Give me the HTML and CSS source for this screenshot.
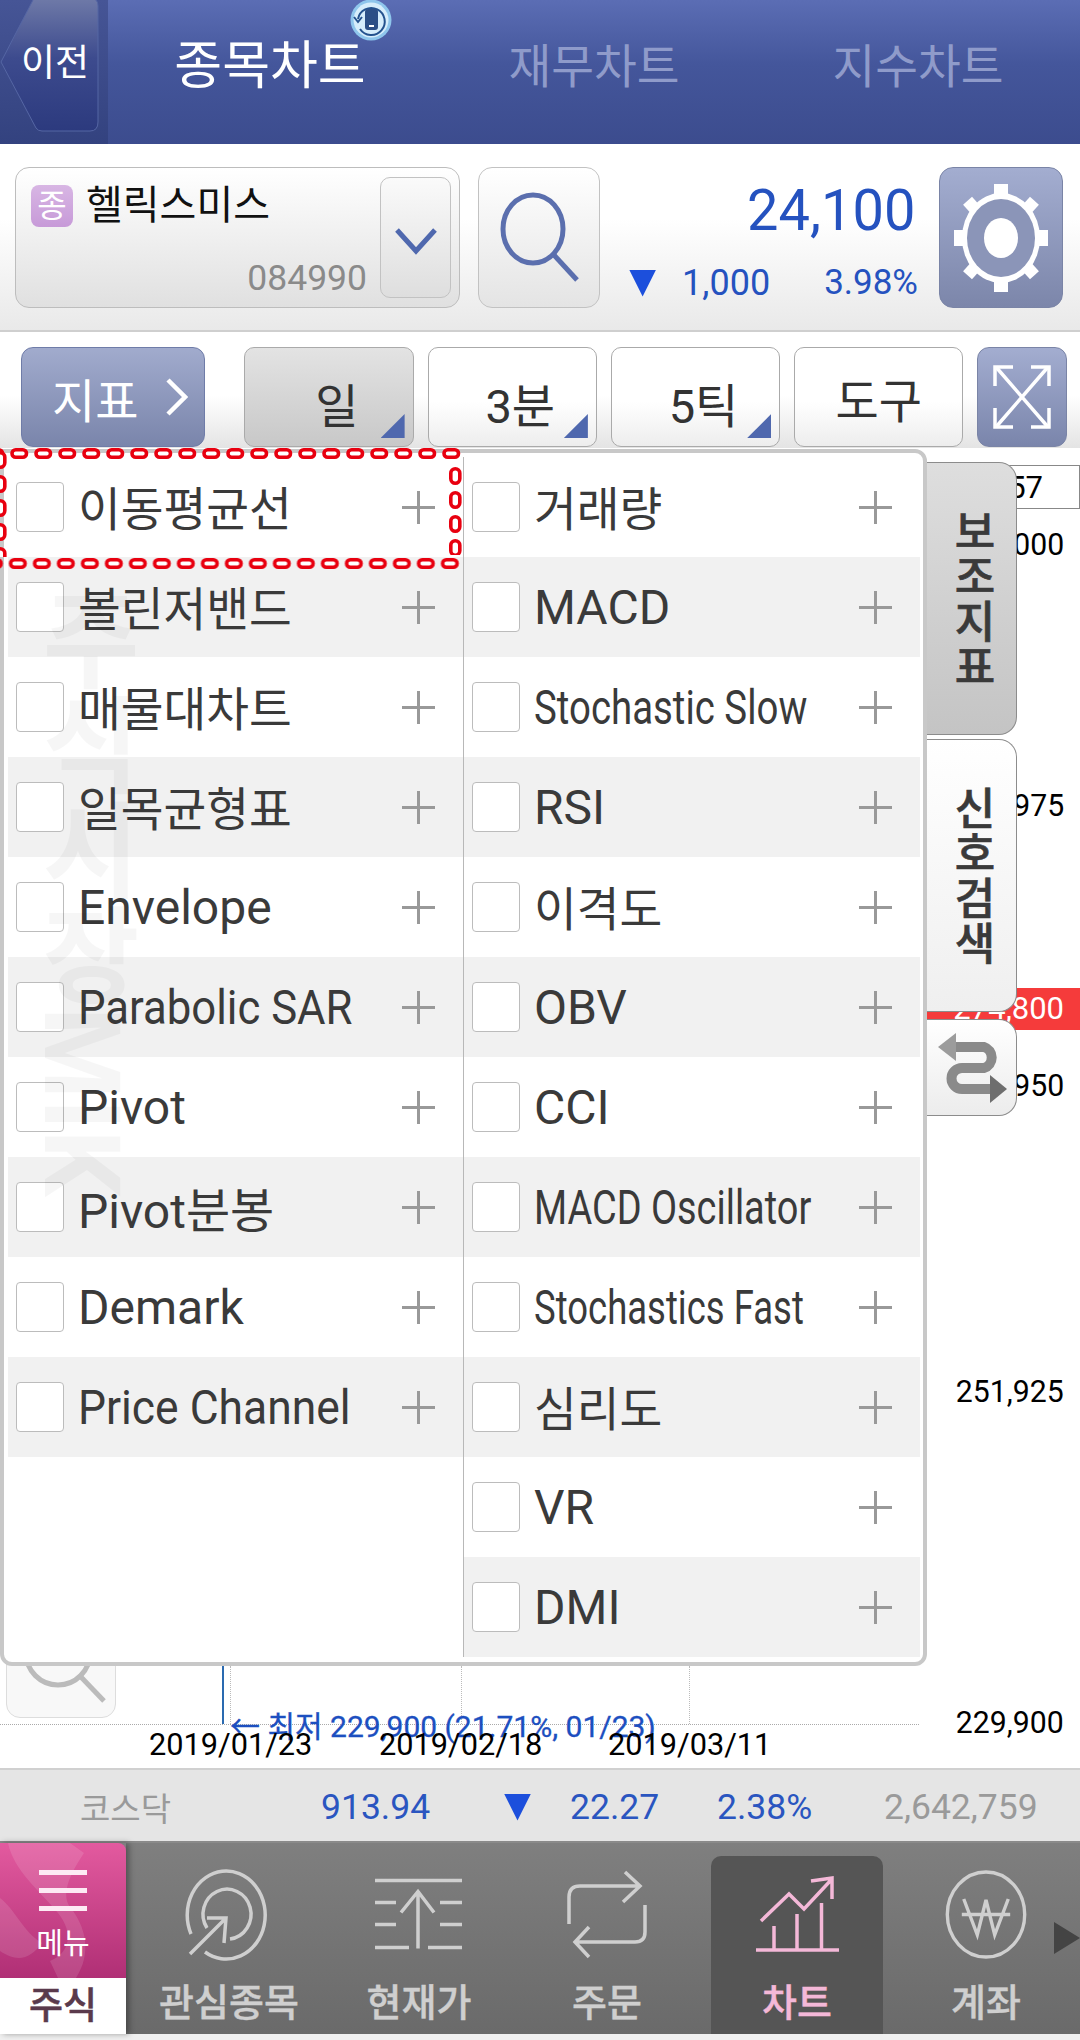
FILE: index.html
```html
<!DOCTYPE html>
<html lang="ko">
<head>
  <meta charset="UTF-8">
  <title>종목차트</title>
  <link rel="stylesheet" href="styles.css">
</head>
<body>
  <div class="page">
    <header class="topbar">
      <div class="back">
        <svg class="back-shape" width="104" height="134" viewBox="0 0 104 134">
          <defs>
            <linearGradient id="backFill" x1="0" y1="0" x2="0" y2="1">
              <stop offset="0" stop-color="#6f7aa8"/>
              <stop offset="0.45" stop-color="#3d4b8e"/>
              <stop offset="1" stop-color="#2c3a7e"/>
            </linearGradient>
          </defs>
          <path d="M1 62 L34 -2 H90 Q98 -2 98 6 V122 Q98 131 90 131 H42 Q38 131 36 128 Z" fill="url(#backFill)" stroke="#5566a4" stroke-width="1"/>
        </svg>
        <span class="back-text">이전</span>
      </div>
      <div class="tab tab-on">종목차트
        <svg class="sync" width="42" height="42" viewBox="0 0 42 42">
          <circle cx="21" cy="21" r="20.500" fill="#8fc6ec"/>
          <circle cx="21" cy="21" r="17.500" fill="#d6edfb"/>
          <path d="M8 20 A13.500 13.500 0 1 1 10 30" fill="none" stroke="#24528e" stroke-width="2"/>
          <path d="M4 18 L8 23 L12 18" fill="none" stroke="#24528e" stroke-width="2"/>
          <rect x="15" y="10" width="13" height="21" rx="3" fill="#2c4f86"/>
          <rect x="19" y="26" width="5" height="2" fill="#fff"/>
        </svg>
      </div>
      <div class="tab">재무차트</div>
      <div class="tab">지수차트</div>
    </header>

    <section class="stockbar">
      <div class="stock-box">
        <div class="stock-info">
          <div class="stock-name"><span class="badge">종</span>헬릭스미스</div>
          <div class="stock-code">084990</div>
        </div>
        <div class="stock-drop">
          <svg width="42" height="28" viewBox="0 0 42 28"><path d="M2 3 L21 24 L40 3" fill="none" stroke="#4f68ae" stroke-width="5"/></svg>
        </div>
      </div>
      <div class="search-btn">
        <svg width="90" height="100" viewBox="0 0 90 100">
          <ellipse cx="39" cy="41" rx="30" ry="34" fill="none" stroke="#5b6fae" stroke-width="5"/>
          <path d="M60 67 L83 92" fill="none" stroke="#5b6fae" stroke-width="5"/>
        </svg>
      </div>
      <div class="quote">
        <div class="quote-price">24,100</div>
        <div class="quote-sub">
          <span class="down-mark"></span>
          <span class="quote-change">1,000</span>
          <span class="quote-rate">3.98%</span>
        </div>
      </div>
      <div class="gear-btn">
        <svg width="94" height="108" viewBox="-47 -54 94 108">
          <g fill="#fff">
            <rect x="-7" y="-54" width="14" height="108"/>
            <rect x="-47" y="-8" width="94" height="16"/>
            <rect x="-6" y="-50" width="12" height="100" transform="rotate(42)"/>
            <rect x="-6" y="-50" width="12" height="100" transform="rotate(-42)"/>
            <ellipse rx="39" ry="45"/>
          </g>
          <ellipse rx="34" ry="39" fill="#8b95b8"/>
          <ellipse rx="17" ry="20" fill="#fff"/>
        </svg>
      </div>
    </section>

    <section class="toolbar">
      <div class="ind-btn">지표
        <svg width="22" height="38" viewBox="0 0 22 38"><path d="M2 2 L19 19 L2 36" fill="none" stroke="#fff" stroke-width="4.5"/></svg>
      </div>
      <div class="tool tool-on tool-low">일<i class="corner"></i></div>
      <div class="tool tool-low">3분<i class="corner"></i></div>
      <div class="tool tool-low">5틱<i class="corner"></i></div>
      <div class="tool">도구</div>
      <div class="expand-btn">
        <svg width="58" height="66" viewBox="0 0 58 66" fill="none" stroke="#fff" stroke-width="3.5">
          <path d="M3 3 L55 63 M55 3 L3 63"/>
          <path d="M20 3 H2 V22 M38 3 H56 V22 M2 44 V63 H20 M56 44 V63 H38"/>
        </svg>
      </div>
    </section>

    <section class="chart">
      <div class="dot-h"></div>
      <div class="dot-v dot-v1"></div>
      <div class="dot-v dot-v2"></div>
      <div class="dot-v dot-v3"></div>
      <div class="low-line"></div>
      <div class="zoom-btn">
        <svg width="100" height="70" viewBox="0 0 100 70">
          <circle cx="51" cy="6" r="32" fill="none" stroke="#bbb" stroke-width="5"/>
          <path d="M74 30 L97 54" fill="none" stroke="#bbb" stroke-width="5"/>
        </svg>
      </div>

      <div class="axis-box">57</div>
      <div class="axis axis-1">000</div>
      <div class="axis axis-2">975</div>
      <div class="axis-now">274,800</div>
      <div class="axis axis-3">950</div>
      <div class="axis axis-4">251,925</div>
      <div class="axis axis-5">229,900</div>

      <div class="low-text">← 최저 229,900 (21.71%, 01/23)</div>
      <div class="date date-1">2019/01/23</div>
      <div class="date date-2">2019/02/18</div>
      <div class="date date-3">2019/03/11</div>

      <div class="side-tabs">
        <div class="side-tab side-tab-on"><span>보조지표</span></div>
        <div class="side-tab"><span>신호검색</span></div>
        <div class="side-swap">
          <svg width="70" height="70" viewBox="0 0 70 70">
            <path d="M16 14 H46 A11 11 0 0 1 46 35 H24 A10.500 10.500 0 0 0 24 56 H54" fill="none" stroke="#8a8a8a" stroke-width="10"/>
            <path d="M0 14 L18 0 V28 Z" fill="#9c9c9c"/>
            <path d="M69 56 L52 42 V70 Z" fill="#6e6e6e"/>
          </svg>
        </div>
      </div>

      <div class="panel">
        <div class="col">
          <div class="row"><i class="check"></i><span class="label ko">이동평균선</span><i class="plus"></i></div>
          <div class="row"><i class="check"></i><span class="label ko">볼린저밴드</span><i class="plus"></i></div>
          <div class="row"><i class="check"></i><span class="label ko">매물대차트</span><i class="plus"></i></div>
          <div class="row"><i class="check"></i><span class="label ko">일목균형표</span><i class="plus"></i></div>
          <div class="row"><i class="check"></i><span class="label">Envelope</span><i class="plus"></i></div>
          <div class="row"><i class="check"></i><span class="label fit-91">Parabolic SAR</span><i class="plus"></i></div>
          <div class="row"><i class="check"></i><span class="label">Pivot</span><i class="plus"></i></div>
          <div class="row"><i class="check"></i><span class="label">Pivot분봉</span><i class="plus"></i></div>
          <div class="row"><i class="check"></i><span class="label">Demark</span><i class="plus"></i></div>
          <div class="row"><i class="check"></i><span class="label fit-92">Price Channel</span><i class="plus"></i></div>
        </div>
        <div class="col col-right">
          <div class="row"><i class="check"></i><span class="label ko">거래량</span><i class="plus"></i></div>
          <div class="row"><i class="check"></i><span class="label">MACD</span><i class="plus"></i></div>
          <div class="row"><i class="check"></i><span class="label fit-80">Stochastic Slow</span><i class="plus"></i></div>
          <div class="row"><i class="check"></i><span class="label">RSI</span><i class="plus"></i></div>
          <div class="row"><i class="check"></i><span class="label ko">이격도</span><i class="plus"></i></div>
          <div class="row"><i class="check"></i><span class="label">OBV</span><i class="plus"></i></div>
          <div class="row"><i class="check"></i><span class="label">CCI</span><i class="plus"></i></div>
          <div class="row"><i class="check"></i><span class="label fit-79">MACD Oscillator</span><i class="plus"></i></div>
          <div class="row"><i class="check"></i><span class="label fit-76">Stochastics Fast</span><i class="plus"></i></div>
          <div class="row"><i class="check"></i><span class="label ko">심리도</span><i class="plus"></i></div>
          <div class="row"><i class="check"></i><span class="label">VR</span><i class="plus"></i></div>
          <div class="row"><i class="check"></i><span class="label">DMI</span><i class="plus"></i></div>
        </div>
        <div class="watermark">주식시장MIK</div>
      </div>

      <!-- red chain around the first row -->
      <svg class="chain" width="470" height="130" viewBox="0 0 470 130">
        <defs>
          <pattern id="pillTop" x="-14" y="0" width="24" height="11" patternUnits="userSpaceOnUse">
            <rect x="2" y="1.800" width="14.500" height="7.400" rx="3.700" fill="#fff" stroke="#e8000f" stroke-width="3.600"/>
          </pattern>
          <pattern id="pillBottom" x="-15.400" y="110" width="24" height="11" patternUnits="userSpaceOnUse">
            <rect x="2" y="1.800" width="14.500" height="7.400" rx="3.700" fill="#fff" stroke="#e8000f" stroke-width="3.600"/>
          </pattern>
          <pattern id="pillRight" x="449" y="19" width="13" height="24" patternUnits="userSpaceOnUse">
            <rect x="1.800" y="1.800" width="9" height="14.500" rx="4.500" fill="#fff" stroke="#e8000f" stroke-width="3.600"/>
          </pattern>
          <pattern id="pillLeft" x="-6" y="3" width="13" height="24" patternUnits="userSpaceOnUse">
            <rect x="1.800" y="1.800" width="9" height="14.500" rx="4.500" fill="#fff" stroke="#e8000f" stroke-width="3.600"/>
          </pattern>
        </defs>
        <rect x="0" y="0" width="462" height="11" fill="url(#pillTop)"/>
        <rect x="0" y="110" width="460" height="11" fill="url(#pillBottom)"/>
        <rect x="449" y="19" width="13" height="88" fill="url(#pillRight)"/>
        <rect x="0" y="3" width="7" height="106" fill="url(#pillLeft)"/>
      </svg>
    </section>

    <section class="indexbar">
      <span class="idx-name">코스닥</span>
      <span class="idx-value">913.94</span>
      <span class="down-mark"></span>
      <span class="idx-change">22.27</span>
      <span class="idx-rate">2.38%</span>
      <span class="idx-volume">2,642,759</span>
    </section>

    <nav class="tabbar">
      <div class="menu">
        <div class="menu-top">
          <svg class="swirl" width="126" height="135" viewBox="0 0 126 135">
            <path d="M8 0 C14 28 40 48 58 70 C74 90 70 110 50 118 L58 135 H76 C92 110 86 84 70 64 C60 50 72 28 84 10 L70 0 Z" fill="#fff" opacity="0.12"/>
            <path d="M0 55 C14 65 24 90 42 100 C30 116 18 120 0 108 Z" fill="#fff" opacity="0.12"/>
          </svg>
          <div class="burger"><i></i><i></i><i></i></div>
          <div class="menu-label">메뉴</div>
        </div>
        <div class="menu-bottom">주식</div>
      </div>

      <div class="nav-item nav-a">
        <svg class="nav-icon" width="84" height="89" viewBox="0 0 84 89">
          <path d="M4 64 A39 44 0 1 1 18 82"/>
          <path d="M20 58 A24 25 0 1 1 43 69"/>
          <path d="M3 84 L39 48 M20 48 H39 L37 73"/>
        </svg>
        <span>관심종목</span>
      </div>
      <div class="nav-item nav-a">
        <svg class="nav-icon" width="88" height="72" viewBox="0 0 88 72">
          <path d="M0 2 H87 M0 24 H21 M0 46 H21 M0 69 H34 M65 24 H87 M65 46 H87 M53 69 H87"/>
          <path d="M43 70 V13 M26 34 L43 13 L59 34"/>
        </svg>
        <span>현재가</span>
      </div>
      <div class="nav-item nav-b">
        <svg class="nav-icon" width="78" height="85" viewBox="0 0 78 85">
          <path d="M1 52 V25 Q1 14 12 14 H72 M57 0 L72 14 L55 30"/>
          <path d="M77 33 V60 Q77 70 67 70 H7 M21 55 L7 70 L21 85"/>
        </svg>
        <span>주문</span>
      </div>
      <div class="nav-item nav-on">
        <svg class="nav-icon" width="83" height="77" viewBox="0 0 83 77">
          <path d="M0 74 H83 M18 50 V74 M41 38 V74 M65.500 27 V74"/>
          <path d="M5 45 L33 18 L48 33 L76 3 M55 5 L76 2 V23"/>
        </svg>
        <span>차트</span>
      </div>
      <div class="nav-item nav-c">
        <svg class="nav-icon" width="84" height="92" viewBox="0 0 84 92">
          <ellipse cx="42" cy="46" rx="40" ry="44"/>
          <path d="M19 30 L33 67 L42 31 L51 67 L65 30 M17 46 H67"/>
        </svg>
        <span>계좌</span>
      </div>
      <i class="nav-more"></i>
    </nav>
    <div class="bottom-strip"></div>
  </div>
</body>
</html>
```

FILE: styles.css
```css
* {
  box-sizing: border-box;
}
body {
  margin: 0;
  font-family: Roboto, "Noto Sans CJK KR", sans-serif;
  color: #333;
  background: #fff;
}
.page {
  width: 1080px;
  height: 2040px;
  display: flex;
  flex-direction: column;
  overflow: hidden;
}

/* top title bar */
.topbar {
  height: 144px;
  display: flex;
  background: linear-gradient(#5b6db4, #44569b 45%, #3c4c8e);
}
.back {
  position: relative;
  width: 108px;
  height: 144px;
  overflow: hidden;
  display: flex;
  align-items: center;
  padding: 0 0 24px 21px;
  background: linear-gradient(#465596, #33427f);
}
.back-shape {
  position: absolute;
  left: 0;
  top: 0;
}
.back-text {
  position: relative;
  font-size: 37px;
  color: #fff;
}
.tab {
  position: relative;
  width: 324px;
  height: 126px;
  display: flex;
  align-items: center;
  justify-content: center;
  padding-bottom: 2px;
  font-size: 46.5px;
  color: #8f9bca;
}
.tab-on {
  font-size: 52px;
  color: #fff;
  padding-bottom: 4px;
}
.sync {
  position: absolute;
  left: 242px;
  top: -1px;
}

/* stock row */
.stockbar {
  height: 188px;
  display: flex;
  padding: 23px 17px 0 15px;
  border-bottom: 2px solid #cfcfcf;
  background: linear-gradient(#fff 40%, #e9e9e9);
}
.stock-box {
  width: 445px;
  height: 141px;
  display: flex;
  padding: 9px 8px 9px 15px;
  border: 1px solid #bdbdbd;
  border-radius: 14px;
  background: linear-gradient(#fff, #e0e0e0);
}
.stock-info {
  width: 336px;
  display: flex;
  flex-direction: column;
  justify-content: space-between;
}
.stock-name {
  display: flex;
  align-items: center;
  margin-top: 8px;
  font-size: 40px;
  line-height: 42px;
  color: #111;
}
.badge {
  width: 42px;
  height: 42px;
  margin-right: 13px;
  border-radius: 8px;
  background: linear-gradient(#d8b6e4, #c79ad8);
  color: #fff;
  font-size: 32px;
  text-align: center;
}
.stock-code {
  margin-bottom: -2px;
  text-align: right;
  font-size: 35.500px;
  line-height: 44px;
  color: #8a8a8a;
}
.stock-drop {
  width: 71px;
  margin-left: 13px;
  display: flex;
  align-items: center;
  justify-content: center;
  padding-top: 6px;
  border: 1px solid #c2c2c2;
  border-radius: 10px;
  background: linear-gradient(#fafafa, #dedede);
}
.search-btn {
  width: 122px;
  height: 141px;
  margin-left: 18px;
  display: flex;
  align-items: center;
  justify-content: center;
  border: 1px solid #c2c2c2;
  border-radius: 14px;
  background: linear-gradient(#fff, #e4e4e4);
}
.quote {
  width: 315px;
  height: 141px;
  display: flex;
  flex-direction: column;
  align-items: flex-end;
  color: #2552bf;
}
.quote-price {
  margin-top: 10px;
  font-size: 58px;
  line-height: 66px;
  transform: scaleX(0.965);
  transform-origin: right center;
}
.quote-sub {
  display: flex;
  align-items: center;
  margin: 18px -3px 0 0;
  font-size: 36px;
  line-height: 44px;
}
.quote-change {
  margin-right: 54px;
}
.quote-rate {
  font-size: 35px;
}
.down-mark {
  width: 27px;
  height: 27px;
  margin-right: 26px;
  background: #1c4fdc;
  clip-path: polygon(0 0, 100% 0, 50% 100%);
}
.gear-btn {
  width: 124px;
  height: 141px;
  margin-left: 24px;
  display: flex;
  align-items: center;
  justify-content: center;
  border: 1px solid #7a84a6;
  border-radius: 14px;
  background: linear-gradient(#a3add0, #7c86aa);
}

/* indicator and period buttons */
.toolbar {
  height: 116px;
  display: flex;
  padding: 15px 13px 0 21px;
  background: linear-gradient(#fff 55%, #e4e4e4);
}
.ind-btn {
  width: 185px;
  height: 100px;
  margin-right: 39px;
  display: flex;
  align-items: center;
  gap: 28px;
  padding-left: 30px;
  border: 1px solid #6f7ca8;
  border-radius: 12px;
  background: linear-gradient(#a1abcd, #7a85ab);
  font-size: 47px;
  color: #fff;
}
.tool {
  position: relative;
  width: 170px;
  height: 100px;
  margin-right: 14px;
  display: flex;
  align-items: center;
  justify-content: center;
  border: 1px solid #aaa;
  border-radius: 10px;
  background: linear-gradient(#fff 55%, #ededed);
  font-size: 47px;
}
.tool-low {
  padding: 10px 0 0 16px;
}
.tool-on {
  background: linear-gradient(#e3e3e3, #c8c8c8);
}
.corner {
  position: absolute;
  right: 8px;
  bottom: 8px;
  width: 24px;
  height: 24px;
  background: #4f68ae;
  clip-path: polygon(100% 0, 100% 100%, 0 100%);
}
.expand-btn {
  width: 90px;
  height: 100px;
  display: flex;
  align-items: center;
  justify-content: center;
  border: 1px solid #7a84a6;
  border-radius: 12px;
  background: linear-gradient(#a3add0, #7a85ab);
}

/* chart canvas */
.chart {
  position: relative;
  height: 1322px;
  border-bottom: 2px solid #d0d0d0;
  background: #fff;
  font-size: 30px;
  color: #000;
}
.dot-h {
  position: absolute;
  left: 0;
  top: 1276px;
  width: 919px;
  border-top: 1px dotted #aaa;
}
.dot-v {
  position: absolute;
  top: 1218px;
  height: 58px;
  border-left: 1px dotted #bbb;
}
.dot-v1 { left: 230px; }
.dot-v2 { left: 461px; }
.dot-v3 { left: 689px; }
.low-line {
  position: absolute;
  left: 222px;
  top: 1218px;
  width: 2px;
  height: 58px;
  background: #2a6ab0;
}
.zoom-btn {
  position: absolute;
  left: 6px;
  top: 1150px;
  width: 110px;
  height: 120px;
  padding-top: 48px;
  border: 1px solid #ddd;
  border-radius: 14px;
  background: #f8f8f8;
}
.axis-box {
  position: absolute;
  left: 1000px;
  top: 17px;
  width: 80px;
  height: 44px;
  padding-right: 36px;
  border: 1px solid #888;
  text-align: right;
  font-size: 31px;
  line-height: 44px;
}
.axis {
  position: absolute;
  right: 16px;
  font-size: 31px;
  line-height: 40px;
  transform: scaleX(0.975);
  transform-origin: right center;
}
.axis-1 { top: 77px; }
.axis-2 { top: 338px; }
.axis-3 { top: 618px; }
.axis-4 { top: 924px; }
.axis-5 { top: 1255px; }
.axis-now {
  position: absolute;
  left: 927px;
  top: 540px;
  width: 153px;
  height: 42px;
  padding-right: 16px;
  background: #f53b3b;
  color: #fff;
  text-align: right;
  font-size: 31px;
  line-height: 42px;
}
.low-text {
  position: absolute;
  left: 230px;
  top: 1259px;
  font-size: 30px;
  line-height: 40px;
  color: #1c4fc0;
  white-space: nowrap;
  -webkit-text-stroke: 0.3px #1c4fc0;
}
.date {
  position: absolute;
  top: 1277px;
  font-size: 30.700px;
  line-height: 40px;
}
.date-1 { left: 149px; }
.date-2 { left: 379px; }
.date-3 { left: 608px; }

/* tabs to the right of the panel */
.side-tabs {
  position: absolute;
  left: 926px;
  top: 14px;
  display: flex;
  flex-direction: column;
}
.side-tab {
  width: 91px;
  height: 273px;
  margin-bottom: 4px;
  display: flex;
  align-items: center;
  justify-content: center;
  border: 1px solid #8c8c8c;
  border-left: 0;
  border-radius: 0 18px 18px 0;
  background: linear-gradient(#fff, #efefef);
  color: #3a3a3a;
  font-size: 44px;
  font-weight: 500;
  -webkit-text-stroke: 0.6px #3a3a3a;
}
.side-tab span {
  writing-mode: vertical-rl;
  text-orientation: upright;
  letter-spacing: 1px;
}
.side-tab-on {
  background: linear-gradient(#dedede, #c4c4c4);
}
.side-swap {
  width: 91px;
  height: 97px;
  margin-top: 3px;
  display: flex;
  align-items: center;
  justify-content: center;
  padding-left: 3px;
  border: 1px solid #8c8c8c;
  border-left: 0;
  border-radius: 0 18px 18px 0;
  background: linear-gradient(#fff, #ececec);
}

/* indicator list popup */
.panel {
  position: absolute;
  left: 0;
  top: 1px;
  width: 927px;
  height: 1217px;
  display: flex;
  align-items: flex-start;
  padding: 4px 3px 0 4px;
  border: 4px solid #c8c8c8;
  border-radius: 0 12px 12px 12px;
  background: #fff;
}
.col {
  width: 456px;
  height: 1200px;
  border-right: 1px solid #b8b8b8;
}
.col-right {
  border-right: 0;
}
.row {
  height: 100px;
  display: flex;
  align-items: center;
  padding-left: 8px;
  padding-right: 28px;
}
.row:nth-child(even) {
  background: #f1f1f1;
}
.check {
  flex: none;
  width: 48px;
  height: 50px;
  margin-right: 14px;
  border: 1px solid #bcbcbc;
  border-radius: 4px;
  background: #fff;
}
.label {
  flex: 1;
  min-width: 0;
  font-size: 48px;
  color: #3a3a3a;
  white-space: nowrap;
  transform-origin: left center;
}
.ko {
  margin-top: -3px;
  font-size: 46.500px;
}
.fit-92 { transform: scaleX(0.925); }
.fit-91 { transform: scaleX(0.91); }
.fit-80 { transform: scaleX(0.8); }
.fit-79 { transform: scaleX(0.79); }
.fit-76 { transform: scaleX(0.76); }
.plus {
  flex: none;
  width: 33px;
  height: 33px;
  background: linear-gradient(#999, #999) center / 33px 3px no-repeat,
    linear-gradient(#999, #999) center / 3px 33px no-repeat;
}
.watermark {
  position: absolute;
  left: 24px;
  top: 134px;
  writing-mode: vertical-rl;
  font-size: 105px;
  font-weight: 700;
  line-height: 105px;
  color: rgba(0, 0, 0, 0.035);
  white-space: nowrap;
}
.chain {
  position: absolute;
  left: 0;
  top: 0;
}

/* market index strip */
.indexbar {
  position: relative;
  height: 73px;
  display: flex;
  align-items: center;
  padding: 3px 0 0 80px;
  border-bottom: 2px solid #8a8a8a;
  background: #e5e5e5;
  font-size: 35.500px;
  color: #2a55c0;
}
.idx-name {
  width: 241px;
  font-size: 33px;
  color: #9a9a9a;
}
.idx-value {
  width: 183px;
}
.indexbar .down-mark {
  margin-right: 39px;
}
.idx-change {
  width: 147px;
}
.idx-rate {
  width: 167px;
}
.idx-volume {
  color: #9a9a9a;
}

/* bottom navigation */
.tabbar {
  position: relative;
  height: 191px;
  display: flex;
  background: linear-gradient(#7f7f7f, #6a6a6a);
}
.menu {
  width: 126px;
  margin-right: 8px;
  box-shadow: 3px 0 6px rgba(0, 0, 0, 0.35);
}
.menu-top {
  position: relative;
  height: 135px;
  padding-top: 27px;
  overflow: hidden;
  border-radius: 0 8px 0 0;
  background: linear-gradient(#e35a9f, #b02f75);
}
.swirl {
  position: absolute;
  left: 0;
  top: 0;
}
.burger {
  position: relative;
  width: 48px;
  margin: 0 0 0 39px;
}
.burger i {
  display: block;
  height: 5px;
  margin-bottom: 13px;
  background: #fdeaf4;
}
.menu-label {
  position: relative;
  margin-top: 10px;
  text-align: center;
  font-size: 29px;
  line-height: 40px;
  color: #fff;
}
.menu-bottom {
  height: 56px;
  background: #fff;
  text-align: center;
  font-size: 37px;
  font-weight: 500;
  line-height: 58px;
  color: #5a3a4c;
  -webkit-text-stroke: 0.5px #5a3a4c;
}
.nav-item {
  display: flex;
  flex-direction: column;
  align-items: center;
  padding-top: 27px;
  font-size: 38px;
  font-weight: 500;
  color: #cfcfcf;
  -webkit-text-stroke: 0.4px currentColor;
}
.nav-item span {
  line-height: 50px;
}
.nav-a { width: 190px; }
.nav-b { width: 186px; }
.nav-c { width: 172px; margin-left: 17px; }
.nav-on {
  width: 172px;
  margin: 13px 0 0 11px;
  padding-top: 14px;
  border-radius: 10px 10px 0 0;
  background: #555;
  color: #f4b8d8;
}
.nav-icon {
  height: 89px;
  margin-bottom: 19px;
  fill: none;
  stroke: #cfcfcf;
  stroke-width: 3.500;
  overflow: visible;
}
.nav-on .nav-icon {
  stroke: #f4b8d8;
}
.nav-more {
  position: absolute;
  right: 0;
  top: 79px;
  width: 26px;
  height: 32px;
  background: #444;
  clip-path: polygon(0 0, 100% 50%, 0 100%);
}
.bottom-strip {
  height: 6px;
  background: #f0f0f0;
}
```
